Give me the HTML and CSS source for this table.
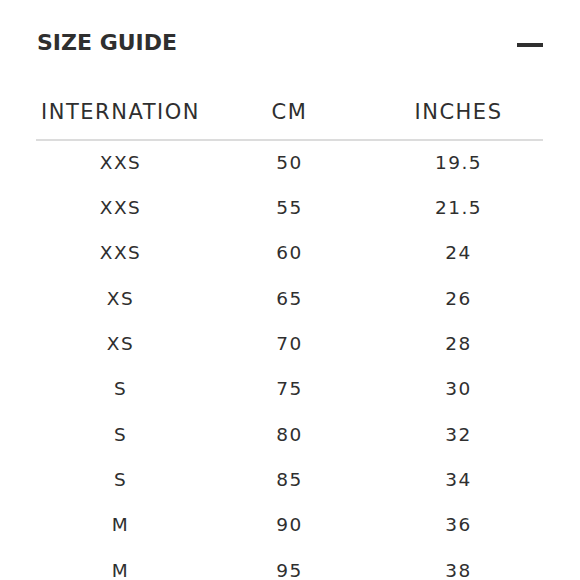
FILE: index.html
```html
<!DOCTYPE html>
<html lang="en">
<head>
<meta charset="utf-8">
<title>Size Guide</title>
<link rel="stylesheet" href="styles.css">
</head>
<body>
<section class="guide">
  <header class="guide-head">
    <h2 class="guide-title">SIZE GUIDE</h2>
    <span class="collapse-icon" aria-label="Collapse"></span>
  </header>
  <table class="size-table">
    <thead>
      <tr><th>INTERNATION</th><th>CM</th><th>INCHES</th></tr>
    </thead>
    <tbody>
      <tr><td>XXS</td><td>50</td><td>19.5</td></tr>
      <tr><td>XXS</td><td>55</td><td>21.5</td></tr>
      <tr><td>XXS</td><td>60</td><td>24</td></tr>
      <tr><td>XS</td><td>65</td><td>26</td></tr>
      <tr><td>XS</td><td>70</td><td>28</td></tr>
      <tr><td>S</td><td>75</td><td>30</td></tr>
      <tr><td>S</td><td>80</td><td>32</td></tr>
      <tr><td>S</td><td>85</td><td>34</td></tr>
      <tr><td>M</td><td>90</td><td>36</td></tr>
      <tr><td>M</td><td>95</td><td>38</td></tr>
    </tbody>
  </table>
</section>
</body>
</html>
```

FILE: styles.css
```css
html, body {
  margin: 0;
  padding: 0;
  background: #ffffff;
}

body {
  font-family: "DejaVu Sans", "Open Sans", sans-serif;
  color: #2f2f2f;
  overflow: hidden;
}

.guide {
  padding: 0 37px 0 36px;
}

.guide-head {
  height: 85px;
  display: flex;
  align-items: center;
  justify-content: space-between;
}

.guide-title {
  margin: 0 0 0 1px;
  font-size: 22px;
  font-weight: 700;
  letter-spacing: 0;
  line-height: 1;
}

.collapse-icon {
  display: block;
  width: 26px;
  height: 4px;
  background: #2f2f2f;
  margin-top: 5px;
}

.size-table {
  width: 100%;
  table-layout: fixed;
  border-collapse: collapse;
}

.size-table th {
  height: 54px;
  padding: 0;
  font-size: 21px;
  font-weight: 400;
  letter-spacing: 1.5px;
  text-align: center;
  vertical-align: middle;
  border-bottom: 2px solid #dcdcdc;
}

.size-table td {
  height: 42.33px;
  padding: 0 0 3px;
  font-size: 18.5px;
  letter-spacing: 1.5px;
  text-align: center;
  vertical-align: middle;
}
```
